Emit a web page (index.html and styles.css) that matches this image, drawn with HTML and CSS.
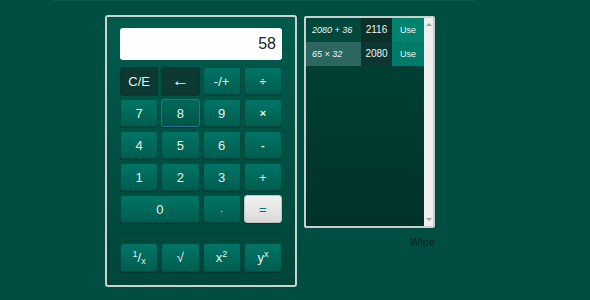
FILE: index.html
```html
<!DOCTYPE html>
<html lang="en">
<head>
    <meta charset="UTF-8">
    <title>Calculator</title>
    <link rel="stylesheet" href="styles.css">
</head>
<body>
    <div class="topline"></div>

    <div class="wrap">
        <!-- Calculadora -->
        <div class="calc">
            <div class="display">58</div>
            <div class="keys">
                <button class="key dark">C/E</button>
                <button class="key dark arrow">&larr;</button>
                <button class="key">-/+</button>
                <button class="key small">&divide;</button>

                <button class="key">7</button>
                <button class="key focus">8</button>
                <button class="key">9</button>
                <button class="key small">&times;</button>

                <button class="key">4</button>
                <button class="key">5</button>
                <button class="key">6</button>
                <button class="key small">-</button>

                <button class="key">1</button>
                <button class="key">2</button>
                <button class="key">3</button>
                <button class="key">+</button>

                <button class="key wide">0</button>
                <button class="key dot">.</button>
                <button class="key equals">=</button>
            </div>
            <div class="sep"></div>
            <div class="keys extra">
                <button class="key"><sup>1</sup>/<sub>x</sub></button>
                <button class="key">&radic;</button>
                <button class="key">x<sup>2</sup></button>
                <button class="key">y<sup>x</sup></button>
            </div>
        </div>

        <!-- Histórico -->
        <div class="side">
            <div class="history">
                <div class="rows">
                    <div class="row">
                        <span class="expr">2080 + 36</span>
                        <span class="res">2116</span>
                        <span class="use">Use</span>
                    </div>
                    <div class="row alt">
                        <span class="expr">65 &times; 32</span>
                        <span class="res">2080</span>
                        <span class="use">Use</span>
                    </div>
                </div>
                <div class="scroll">
                    <span class="up"></span>
                    <span class="down"></span>
                </div>
            </div>
            <div class="wipe">Wipe</div>
        </div>
    </div>
</body>
</html>
```

FILE: styles.css
```css
body {
    margin: 0;
    background-color: #004d41;
    font-family: "Liberation Sans", Arial, sans-serif;
    height: 300px;
    overflow: hidden;
}

.topline {
    margin-left: 53px;
    width: 422px;
    height: 1px;
    background-color: #0b5a4d;
}

.wrap {
    display: flex;
    align-items: flex-start;
    gap: 7px;
    margin: 14px 0 0 105px;
}

/* Calculadora */
.calc {
    width: 162px;
    padding: 11px 13px 13px;
    border: 2px solid #c9d3d0;
    border-radius: 3px;
    background: linear-gradient(#005b4d, #004539);
}

.display {
    height: 32px;
    line-height: 32px;
    background-color: #ffffff;
    border-radius: 3px;
    text-align: right;
    padding-right: 6px;
    font-size: 16px;
    color: #222222;
    margin-bottom: 7px;
}

.keys {
    display: grid;
    grid-template-columns: repeat(4, 1fr);
    grid-auto-rows: 28px;
    column-gap: 3px;
    row-gap: 4px;
}

.keys.extra {
    grid-auto-rows: 29px;
}

.key {
    border: 1px solid #004a3f;
    border-radius: 3px;
    background: linear-gradient(#007565, #005d50);
    color: #e6f2ef;
    font-family: "Liberation Sans", Arial, sans-serif;
    font-size: 13px;
    padding: 0;
    box-shadow: 0 1px 1px rgba(0, 0, 0, 0.25);
}

.key.small {
    font-size: 11px;
    font-weight: bold;
}

.key.dot {
    font-size: 9px;
}

.key.dark {
    background: #0c3a33;
    border-color: #0a332d;
}

.key.arrow {
    font-size: 17px;
}

.key.focus {
    border-color: #2f6e93;
    background: linear-gradient(#00695b, #005648);
}

.key.wide {
    grid-column: span 2;
}

.key.equals {
    background: linear-gradient(#f2f2f2, #d9d9d9);
    border-color: #c4c4c4;
    color: #00796b;
}

.key sup,
.key sub {
    font-size: 9px;
}

.key sub {
    vertical-align: -2px;
}

.sep {
    height: 2px;
    background-color: #004236;
    margin: 9px -3px;
}

/* Histórico */
.side {
    display: flex;
    flex-direction: column;
    align-items: flex-end;
}

.history {
    display: flex;
    width: 127px;
    height: 208px;
    border: 2px solid #c8cfcd;
    border-radius: 2px;
    background: linear-gradient(#004338, #00322a);
    margin-top: 1px;
}

.rows {
    flex: 1;
}

.row {
    display: flex;
    height: 24px;
    line-height: 24px;
    font-size: 9px;
    color: #eef5f3;
}

.expr {
    width: 49px;
    padding-left: 6px;
    font-style: italic;
    background-color: #00473c;
}

.res {
    width: 31px;
    text-align: center;
    background-color: #0c2f2a;
    font-size: 10px;
}

.use {
    width: 32px;
    text-align: center;
    background-color: #00826f;
}

.row.alt .expr {
    background-color: #2b675e;
}

.row.alt .res {
    background-color: #0c3631;
}

.row.alt .use {
    background-color: #007a69;
}

.scroll {
    position: relative;
    width: 9px;
    background-color: #efefef;
}

.scroll .up,
.scroll .down {
    position: absolute;
    left: 2px;
    width: 0;
    height: 0;
    border-left: 3px solid transparent;
    border-right: 3px solid transparent;
}

.scroll .up {
    top: 5px;
    border-bottom: 3px solid #a3a3a3;
}

.scroll .down {
    bottom: 5px;
    border-top: 3px solid #a3a3a3;
}

.wipe {
    margin-top: 8px;
    font-size: 11px;
    color: #0a2622;
}
```
